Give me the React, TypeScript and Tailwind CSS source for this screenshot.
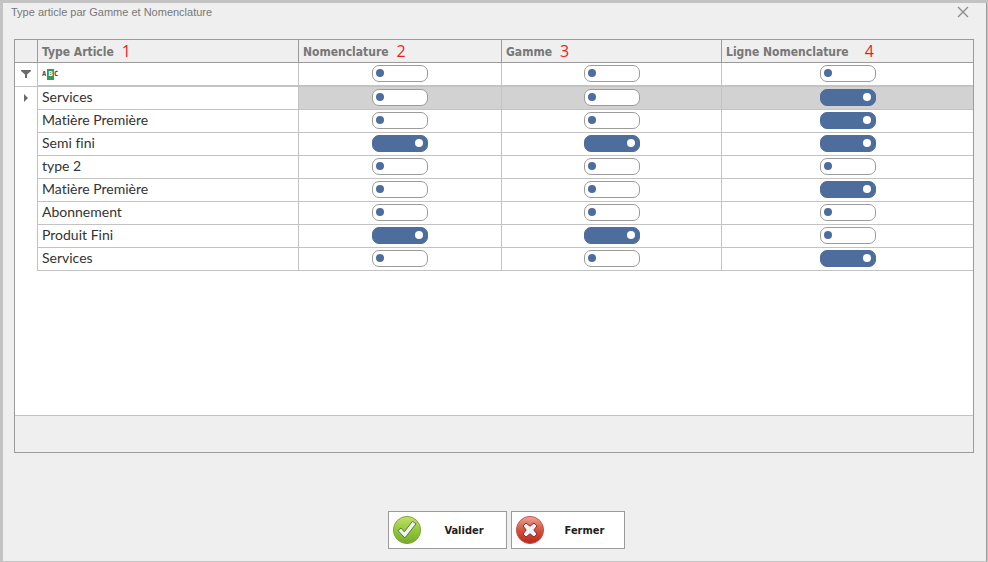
import React, { useState } from "react";
import { clsx } from "clsx";

const TAHOMA = "font-['DejaVu_Sans_Condensed','DejaVu_Sans',sans-serif]";

const columns = [
  { label: "Type Article", mark: "1", gap: "gap-2" },
  { label: "Nomenclature", mark: "2", gap: "gap-2" },
  { label: "Gamme", mark: "3", gap: "gap-2" },
  { label: "Ligne Nomenclature", mark: "4", gap: "gap-4" },
];

const rows: { name: string; on: boolean[] }[] = [
  { name: "Services", on: [false, false, true] },
  { name: "Matière Première", on: [false, false, true] },
  { name: "Semi fini", on: [true, true, true] },
  { name: "type 2", on: [false, false, false] },
  { name: "Matière Première", on: [false, false, true] },
  { name: "Abonnement", on: [false, false, false] },
  { name: "Produit Fini", on: [true, true, false] },
  { name: "Services", on: [false, false, true] },
];

function Toggle({ label, initial }: { label: string; initial: boolean }) {
  const [on, setOn] = useState(initial);
  return (
    <input
      type="checkbox"
      role="switch"
      aria-label={label}
      checked={on}
      onChange={() => setOn(!on)}
      className={clsx(
        "mx-auto flex h-[17px] w-14 appearance-none rounded-[7px] border pt-[3px] pr-1 pl-[3px] before:block before:size-2 before:rounded-full before:content-['']",
        on
          ? "justify-end border-[#4d6d9d] bg-[#4d6d9d] before:bg-white"
          : "justify-start border-[#9b9b9b] bg-white before:bg-[#4d6d9d]",
      )}
    />
  );
}

function ValidIcon() {
  return (
    <svg viewBox="0 0 30 30" className="size-[30px]" aria-hidden="true">
      <defs>
        <linearGradient id="green" x1="0" y1="0" x2="0" y2="1">
          <stop offset="0" stopColor="#c3e06a" />
          <stop offset="0.5" stopColor="#93c83c" />
          <stop offset="1" stopColor="#7aa82b" />
        </linearGradient>
      </defs>
      <circle cx="15" cy="15" r="13.6" fill="url(#green)" stroke="#7fa63c" strokeWidth="1" />
      <path
        d="M6 15.6 L9 13 L12.3 16.9 L20.4 6.3 L24 8.8 L12.9 23 Z"
        fill="#eef3fa"
        stroke="#5d7f2b"
        strokeWidth="1"
        strokeLinejoin="round"
      />
    </svg>
  );
}

function CloseIcon() {
  return (
    <svg viewBox="0 0 30 30" className="size-[30px]" aria-hidden="true">
      <defs>
        <linearGradient id="red" x1="0" y1="0" x2="0" y2="1">
          <stop offset="0" stopColor="#eda797" />
          <stop offset="0.5" stopColor="#d4523f" />
          <stop offset="1" stopColor="#b9251c" />
        </linearGradient>
      </defs>
      <circle cx="15" cy="15" r="13.6" fill="url(#red)" stroke="#c05a50" strokeWidth="1" />
      <path
        d="M11 8 L15 11.2 L19 8 L22 11 L18.8 15 L22 19 L19 22 L15 18.8 L11 22 L8 19 L11.2 15 L8 11 Z"
        fill="#eef3fa"
        stroke="#8f2d26"
        strokeWidth="1"
        strokeLinejoin="round"
      />
    </svg>
  );
}

export default function App() {
  return (
    <main
      className={clsx(
        "flex min-h-screen flex-col border-t-[3px] border-r border-b border-l-[3px] border-[#c3c3c3] bg-[#efefef]",
        TAHOMA,
      )}
    >
      <div className="flex grow flex-col border-r border-[#9b9b9b]">
        <header className="flex h-9 items-start justify-between pr-[17px] pl-2">
          <h1 className="pt-px font-['Liberation_Sans',Arial,sans-serif] text-[11px] leading-4 text-[#777777]">
            Type article par Gamme et Nomenclature
          </h1>
          <button type="button" aria-label="Fermer la fenêtre" className="pt-[3px]">
            <svg viewBox="0 0 12 12" className="size-3" aria-hidden="true">
              <path d="M1 1 L11 11 M11 1 L1 11" stroke="#8a8a8a" strokeWidth="1.3" />
            </svg>
          </button>
        </header>

        <section className="mr-3 ml-[11px] flex h-[414px] flex-col border border-[#9b9b9b] bg-white">
          <table className="w-full table-fixed border-separate border-spacing-0">
            <colgroup>
              <col className="w-[23px]" />
              <col className="w-[261px]" />
              <col className="w-[203px]" />
              <col className="w-[220px]" />
              <col />
            </colgroup>
            <thead>
              <tr className="bg-[#efefef]">
                <th aria-label="Indicateur" className="border-r border-b border-[#9b9b9b] p-0" />
                {columns.map((c) => (
                  <th
                    key={c.label}
                    className="h-[23px] border-r border-b border-[#9b9b9b] p-0 pl-1 last:border-r-0"
                  >
                    <div className={clsx("flex h-[22px] items-center", c.gap)}>
                      <span className="pt-px text-xs font-bold text-[#777777]">{c.label}</span>
                      <span className="font-['Open_Sans',sans-serif] text-base leading-5 font-normal text-[#ed1c24]">
                        {c.mark}
                      </span>
                    </div>
                  </th>
                ))}
              </tr>
            </thead>
            <tbody>
              <tr>
                <td className="h-6 border-r border-b border-[#c3c3c3] p-0 pb-[2px]">
                  <svg viewBox="0 0 10 10" className="mx-auto size-[10px]" aria-hidden="true">
                    <path d="M0 1 H10 V2 L6 5.5 V9 H4 V5.5 L0 2 Z" fill="#6b6b6b" />
                  </svg>
                </td>
                <td className="border-r border-b-2 border-[#c3c3c3] p-0 pl-1">
                  <div className="flex h-[11px] items-center font-['DejaVu_Sans_Mono',monospace] text-[7px] leading-[11px] font-bold text-[#444444]">
                    <span className="w-[5px]">A</span>
                    <span className="w-[7px] bg-[#36995a] text-center text-white">B</span>
                    <span className="w-[5px]">C</span>
                  </div>
                </td>
                {columns.slice(1).map((c) => (
                  <td
                    key={c.label}
                    className="border-r border-b-2 border-[#c3c3c3] p-0 pt-[2px] pb-[3px] last:border-r-0"
                  >
                    <Toggle label={`Filtre ${c.label}`} initial={false} />
                  </td>
                ))}
              </tr>
              {rows.map((r, i) => (
                <tr key={i}>
                  <td className="h-[23px] border-r border-[#c3c3c3] p-0 pb-[2px]">
                    {i === 0 && (
                      <svg viewBox="0 0 4 8" className="mx-auto h-2 w-1" aria-hidden="true">
                        <path d="M0 0 L4 4 L0 8 Z" fill="#6b6b6b" />
                      </svg>
                    )}
                  </td>
                  <td className="border-r border-b border-[#c3c3c3] p-0 pl-1">
                    <div className="h-[22px] font-['Lato',sans-serif] text-sm leading-5 text-[#333333] [font-variant-ligatures:none]">
                      {r.name}
                    </div>
                  </td>
                  {r.on.map((on, j) => (
                    <td
                      key={j}
                      className={clsx(
                        "border-r border-b border-[#c3c3c3] p-0 pt-[2px] pb-[3px] last:border-r-0",
                        i === 0 && "bg-[#d2d2d2]",
                      )}
                    >
                      <Toggle label={`${r.name} – ${columns[j + 1].label}`} initial={on} />
                    </td>
                  ))}
                </tr>
              ))}
            </tbody>
          </table>
          <div className="mt-auto h-[37px] border-t border-[#c3c3c3] bg-[#efefef]" />
        </section>

        <footer className="flex justify-center gap-1 pt-[58px] pl-6 text-[11px] font-bold text-[#222222]">
          <button
            type="button"
            className="flex h-[38px] w-[119px] items-center border border-[#9b9b9b] bg-white pl-[3px]"
          >
            <ValidIcon />
            <span className="grow pt-[2px] text-center">Valider</span>
          </button>
          <button
            type="button"
            className="flex h-[38px] w-[114px] items-center border border-[#9b9b9b] bg-white pl-[3px]"
          >
            <CloseIcon />
            <span className="grow pt-[2px] text-center">Fermer</span>
          </button>
        </footer>
      </div>
    </main>
  );
}
